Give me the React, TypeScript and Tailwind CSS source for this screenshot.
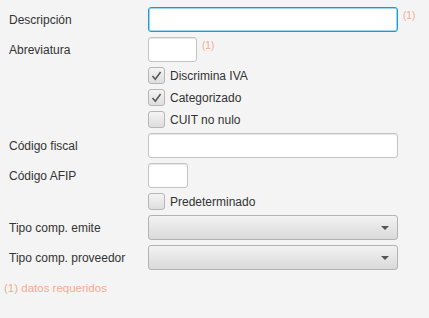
import { ReactNode } from 'react'

function Req() {
  return <span className="ml-[5px] -mt-[7px] text-[10px] leading-none text-[#f7ab8f]">(1)</span>
}

function TextField({ width, focused }: { width: string; focused?: boolean }) {
  return (
    <div
      className={
        focused
          ? `${width} h-[25px] rounded-[3px] border border-[#1a9bd7] bg-white shadow-[inset_0_0_0_1px_#9fd5f0]`
          : `${width} h-[25px] rounded-[3px] border border-[#c4c4c4] bg-white shadow-[inset_0_1px_1px_#e6e6e6]`
      }
    />
  )
}

function CheckBox({ label, checked }: { label: string; checked?: boolean }) {
  return (
    <div className="flex h-[17px] items-center gap-[5px]">
      <div className="flex h-[17px] w-[17px] items-center justify-center rounded-[3px] border border-[#b6b6b6] bg-gradient-to-b from-[#f4f4f4] to-[#dedede]">
        {checked && (
          <svg width="11" height="10" viewBox="0 0 11 10">
            <path d="M1.5 5 L4.3 8.2 L9.6 1" fill="none" stroke="#5a5a5a" strokeWidth="1.6" />
          </svg>
        )}
      </div>
      <span>{label}</span>
    </div>
  )
}

function Combo() {
  return (
    <div className="flex h-[25px] w-[250px] items-center justify-end rounded-[3px] border border-[#b3b3b3] bg-gradient-to-b from-[#f2f2f2] to-[#dadada] pr-[8px]">
      <svg width="8" height="4" viewBox="0 0 8 4">
        <path d="M0 0 H8 L4 4 Z" fill="#555555" />
      </svg>
    </div>
  )
}

function Row({ label, children }: { label?: string; children: ReactNode }) {
  return (
    <>
      <div className="flex items-center">{label}</div>
      <div className="flex items-center">{children}</div>
    </>
  )
}

export default function App() {
  return (
    <div
      className="h-[318px] w-[429px] bg-[#f4f4f4] text-[12px] text-[#333333]"
      style={{ fontFamily: '"Liberation Sans", Arial, sans-serif' }}
    >
      <div className="grid grid-cols-[139px_auto] gap-y-[5px] pl-[9px] pt-[7px]">
        <Row label="Descripción">
          <TextField width="w-[250px]" focused />
          <Req />
        </Row>
        <Row label="Abreviatura">
          <TextField width="w-[49px]" />
          <Req />
        </Row>
        <Row>
          <CheckBox label="Discrimina IVA" checked />
        </Row>
        <Row>
          <CheckBox label="Categorizado" checked />
        </Row>
        <Row>
          <CheckBox label="CUIT no nulo" />
        </Row>
        <Row label="Código fiscal">
          <TextField width="w-[250px]" />
        </Row>
        <Row label="Código AFIP">
          <TextField width="w-[40px]" />
        </Row>
        <Row>
          <CheckBox label="Predeterminado" />
        </Row>
        <Row label="Tipo comp. emite">
          <Combo />
        </Row>
        <Row label="Tipo comp. proveedor">
          <Combo />
        </Row>
      </div>
      <div className="mt-[10px] pl-[4px] text-[11.5px] text-[#f7ab8f]">(1) datos requeridos</div>
    </div>
  )
}
